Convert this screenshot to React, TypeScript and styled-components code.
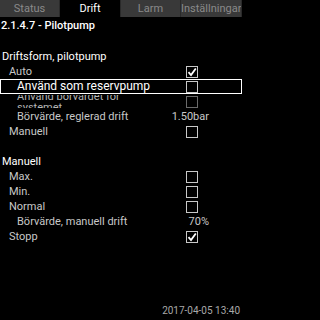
import styled, { createGlobalStyle } from "styled-components";

const GlobalStyle = createGlobalStyle`
    html, body {
        margin: 0;
        padding: 0;
        background: #000;
    }
    body {
        font-family: Roboto, "Liberation Sans", sans-serif;
    }
`;

type Tab = { label: string; active?: boolean };

const tabs: Tab[] = [
    { label: "Status" },
    { label: "Drift", active: true },
    { label: "Larm" },
    { label: "Inställningar" },
];

type Item =
    | { kind: "check"; label: string; indent: number; checked?: boolean; selected?: boolean; dim?: boolean; wrap?: boolean }
    | { kind: "value"; label: string; indent: number; value: string };

const autoGroup: Item[] = [
    { kind: "check", label: "Auto", indent: 9, checked: true },
    { kind: "check", label: "Använd som reservpump", indent: 17, selected: true },
    { kind: "check", label: "Använd börvärdet för systemet", indent: 17, dim: true, wrap: true },
    { kind: "value", label: "Börvärde, reglerad drift", indent: 17, value: "1.50bar" },
    { kind: "check", label: "Manuell", indent: 9 },
];

const manualGroup: Item[] = [
    { kind: "check", label: "Max.", indent: 9 },
    { kind: "check", label: "Min.", indent: 9 },
    { kind: "check", label: "Normal", indent: 9 },
    { kind: "value", label: "Börvärde, manuell drift", indent: 17, value: "70%" },
    { kind: "check", label: "Stopp", indent: 9, checked: true },
];

function CheckBox({ checked, dim }: { checked?: boolean; dim?: boolean }) {
    return (
        <Box $dim={dim}>
            {checked && (
                <svg width="10" height="10" viewBox="0 0 10 10">
                    <path d="M1.5 5.2 L4 8 L8.8 1.5" fill="none" stroke="#fff" strokeWidth="1.8" />
                </svg>
            )}
        </Box>
    );
}

function Row({ item }: { item: Item }) {
    if (item.kind === "value") {
        return (
            <RowWrap>
                <Label $indent={item.indent}>{item.label}</Label>
                <Cell>
                    <Value>{item.value}</Value>
                </Cell>
            </RowWrap>
        );
    }
    return (
        <RowWrap $selected={item.selected}>
            {item.wrap ? (
                <ClipLabel $indent={item.indent}>
                    <Wrapped>{item.label}</Wrapped>
                </ClipLabel>
            ) : (
                <Label $indent={item.indent} $selected={item.selected}>
                    {item.label}
                </Label>
            )}
            <Cell>
                <CheckBox checked={item.checked} dim={item.dim} />
            </Cell>
        </RowWrap>
    );
}

export default function App() {
    return (
        <Screen>
            <GlobalStyle />
            <TabBar>
                {tabs.map((t) => (
                    <TabItem key={t.label} $active={t.active}>{t.label}</TabItem>
                ))}
            </TabBar>
            <Crumb>2.1.4.7 - Pilotpump</Crumb>
            <Content>
                <Heading>Driftsform, pilotpump</Heading>
                {autoGroup.map((it) => <Row key={it.label} item={it} />)}
                <Heading $gap>Manuell</Heading>
                {manualGroup.map((it) => <Row key={it.label} item={it} />)}
            </Content>
            <Footer>2017-04-05 13:40</Footer>
        </Screen>
    );
}

const Screen = styled.div`
    width: 242px;
    height: 320px;
    background: #000;
    display: flex;
    flex-direction: column;
    overflow: hidden;
`;

const TabBar = styled.div`
    display: grid;
    grid-template-columns: 60px 61px 60px 61px;
    height: 17px;
`;

const TabItem = styled.div<{ $active?: boolean }>`
    background: ${(p) => (p.$active ? "#000" : "#393939")};
    color: ${(p) => (p.$active ? "#fff" : "#8a8a8a")};
    font-size: 11px;
    line-height: 17px;
    text-align: center;
    white-space: nowrap;
    overflow: hidden;
    border-right: 1px solid #2a2a2a;
`;

const Crumb = styled.div`
    color: #fff;
    font-size: 11px;
    font-weight: 500;
    line-height: 15px;
    padding: 1px 0 0 1px;
    height: 15px;
`;

const Content = styled.div`
    display: flex;
    flex-direction: column;
    padding-top: 16px;
    flex: 1;
`;

const Heading = styled.div<{ $gap?: boolean }>`
    color: #fff;
    font-size: 11px;
    line-height: 15px;
    height: 15px;
    padding-left: 2px;
    margin-top: ${(p) => (p.$gap ? "15px" : "0")};
`;

const RowWrap = styled.div<{ $selected?: boolean }>`
    display: flex;
    align-items: center;
    height: 15px;
    box-sizing: border-box;
    border: 1px solid ${(p) => (p.$selected ? "#fff" : "transparent")};
    position: relative;
    z-index: ${(p) => (p.$selected ? 1 : 0)};
    background: ${(p) => (p.$selected ? "#000" : "transparent")};
`;

const Label = styled.div<{ $indent: number; $selected?: boolean }>`
    flex: 1;
    padding-left: ${(p) => p.$indent - 1}px;
    color: ${(p) => (p.$selected ? "#fff" : "#c8c8c8")};
    font-size: ${(p) => (p.$selected ? "12px" : "11px")};
    line-height: 15px;
    white-space: nowrap;
`;

const ClipLabel = styled.div<{ $indent: number }>`
    flex: 1;
    align-self: flex-start;
    height: 13px;
    overflow: hidden;
    padding-left: ${(p) => p.$indent - 1}px;
`;

const Wrapped = styled.div`
    width: 104px;
    margin-top: -4px;
    color: #b4b4b4;
    font-size: 11px;
    line-height: 11px;
`;

const Cell = styled.div`
    width: 26px;
    margin-right: 30px;
    display: flex;
    align-items: center;
    justify-content: flex-end;
`;

const Box = styled.div<{ $dim?: boolean }>`
    width: 12px;
    height: 12px;
    box-sizing: border-box;
    border: 1px solid ${(p) => (p.$dim ? "#6a6a6a" : "#c8c8c8")};
    margin-right: 13px;
    display: flex;
    align-items: center;
    justify-content: center;
`;

const Value = styled.div`
    color: #c8c8c8;
    font-size: 11px;
    white-space: nowrap;
    padding-right: 2px;
`;

const Footer = styled.div`
    color: #a8a8a8;
    font-size: 10px;
    text-align: right;
    padding: 0 2px 3px 0;
    line-height: 12px;
`;
